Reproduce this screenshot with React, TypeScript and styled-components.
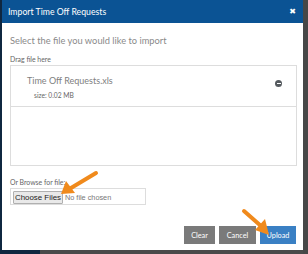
import React from "react";
import styled, { createGlobalStyle } from "styled-components";

const Global = createGlobalStyle`
  html, body { margin: 0; padding: 0; }
  body {
    width: 308px;
    height: 254px;
    overflow: hidden;
    background: linear-gradient(90deg, #0f2740 0 40px, #4a4a4a 40px 100%);
    font-family: Lato, "Open Sans", sans-serif;
  }
`;

const Backdrop = styled.div`
  position: relative;
  width: 308px;
  height: 254px;
  display: flex;
  align-items: flex-start;
  background: linear-gradient(90deg, #0f2740 0 2px, #ffffff00 2px 303px, #474747 303px);
`;

const Modal = styled.div`
  margin-left: 2px;
  width: 301px;
  height: 250px;
  background: #ffffff;
  display: flex;
  flex-direction: column;
`;

const Header = styled.div`
  height: 23px;
  background: #0b5394;
  display: flex;
  align-items: center;
  justify-content: space-between;
  padding: 0 7px 0 6px;
  box-sizing: border-box;
`;

const Title = styled.div`
  color: #ffffff;
  font-size: 8.7px;
  line-height: 10px;
`;

const Close = styled.span`
  color: #ffffff;
  font-size: 8px;
  font-weight: 900;
  font-family: "DejaVu Sans", sans-serif;
  line-height: 1;
`;

const Body = styled.div`
  flex: 1;
  display: flex;
  flex-direction: column;
  padding: 12px 6px 0 8px;
`;

const Lead = styled.div`
  color: #8a8a8a;
  font-size: 9.3px;
  line-height: 12px;
  height: 12px;
`;

const Label = styled.div<{ $top: number }>`
  color: #666666;
  font-size: 6.9px;
  line-height: 9px;
  height: 9px;
  margin-top: ${(p) => p.$top}px;
`;

const DropBox = styled.div`
  margin-top: 1px;
  height: 101px;
  border: 1px solid #dddddd;
  box-sizing: border-box;
  display: flex;
  flex-direction: column;
`;

const FileRow = styled.div`
  height: 41px;
  flex: none;
  border-bottom: 1px solid #dddddd;
  display: flex;
  justify-content: space-between;
  align-items: flex-start;
  padding: 9px 14px 0 16px;
  box-sizing: border-box;
`;

const FileInfo = styled.div`
  display: flex;
  flex-direction: column;
`;

const FileName = styled.div`
  color: #808080;
  font-size: 9px;
  line-height: 12px;
`;

const FileSize = styled.div`
  color: #666666;
  font-size: 6.7px;
  line-height: 9px;
  margin-top: 4px;
  padding-left: 7px;
`;

const Remove = styled.div`
  width: 7px;
  height: 7px;
  border-radius: 50%;
  background: #555a5f;
  margin-top: 5px;
  position: relative;
  &::after {
    content: "";
    position: absolute;
    left: 1.5px;
    right: 1.5px;
    top: 3px;
    height: 1px;
    background: #ffffff;
  }
`;

const FileInputBox = styled.div`
  margin-top: 1px;
  width: 136px;
  height: 17px;
  border: 1px solid #dddddd;
  box-sizing: border-box;
  display: flex;
  align-items: center;
  padding-left: 2px;
  gap: 2px;
`;

const ChooseButton = styled.div`
  height: 13px;
  width: 50px;
  background: #e9e9e9;
  border: 1px solid #b0b0b0;
  border-radius: 1px;
  font-family: "Liberation Sans", Arial, sans-serif;
  font-size: 7.9px;
  color: #222;
  box-sizing: border-box;
  display: flex;
  align-items: center;
  justify-content: center;
  margin-top: 1px;
`;

const NoFile = styled.span`
  font-family: "Liberation Sans", Arial, sans-serif;
  font-size: 7.3px;
  color: #777;
  margin-top: 1px;
`;

const Footer = styled.div`
  margin-top: auto;
  margin-bottom: 6px;
  display: flex;
  justify-content: flex-end;
  gap: 4px;
  padding-right: 1px;
`;

const Button = styled.div<{ $primary?: boolean; $w: number }>`
  width: ${(p) => p.$w}px;
  height: 18px;
  background: ${(p) => (p.$primary ? "#3a80c4" : "#7a7a7a")};
  color: #ffffff;
  font-size: 7.3px;
  display: flex;
  align-items: center;
  justify-content: center;
`;

const Arrow = styled.svg`
  position: absolute;
  pointer-events: none;
`;

export default function App() {
  return (
    <>
      <Global />
      <Backdrop>
        <Modal>
          <Header>
            <Title>Import Time Off Requests</Title>
            <Close>✖</Close>
          </Header>
          <Body>
            <Lead>Select the file you would like to import</Lead>
            <Label $top={8}>Drag file here</Label>
            <DropBox>
              <FileRow>
                <FileInfo>
                  <FileName>Time Off Requests.xls</FileName>
                  <FileSize>size: 0.02 MB</FileSize>
                </FileInfo>
                <Remove />
              </FileRow>
            </DropBox>
            <Label $top={12}>Or Browse for file:</Label>
            <FileInputBox>
              <ChooseButton>Choose Files</ChooseButton>
              <NoFile>No file chosen</NoFile>
            </FileInputBox>
            <Footer>
              <Button $w={31}>Clear</Button>
              <Button $w={37}>Cancel</Button>
              <Button $w={36} $primary>Upload</Button>
            </Footer>
          </Body>
        </Modal>
        <Arrow width="308" height="254" viewBox="0 0 308 254" style={{ left: 0, top: 0 }}>
          <g stroke="#f08a1c" strokeWidth="4" strokeLinecap="round" fill="#f08a1c">
            <line x1="96" y1="173" x2="71" y2="188" />
            <polygon points="61,194 66,181 75,193" stroke="none" />
            <line x1="244" y1="211" x2="261" y2="226" />
            <polygon points="269,235 255,230 265,219" stroke="none" />
          </g>
        </Arrow>
      </Backdrop>
    </>
  );
}
